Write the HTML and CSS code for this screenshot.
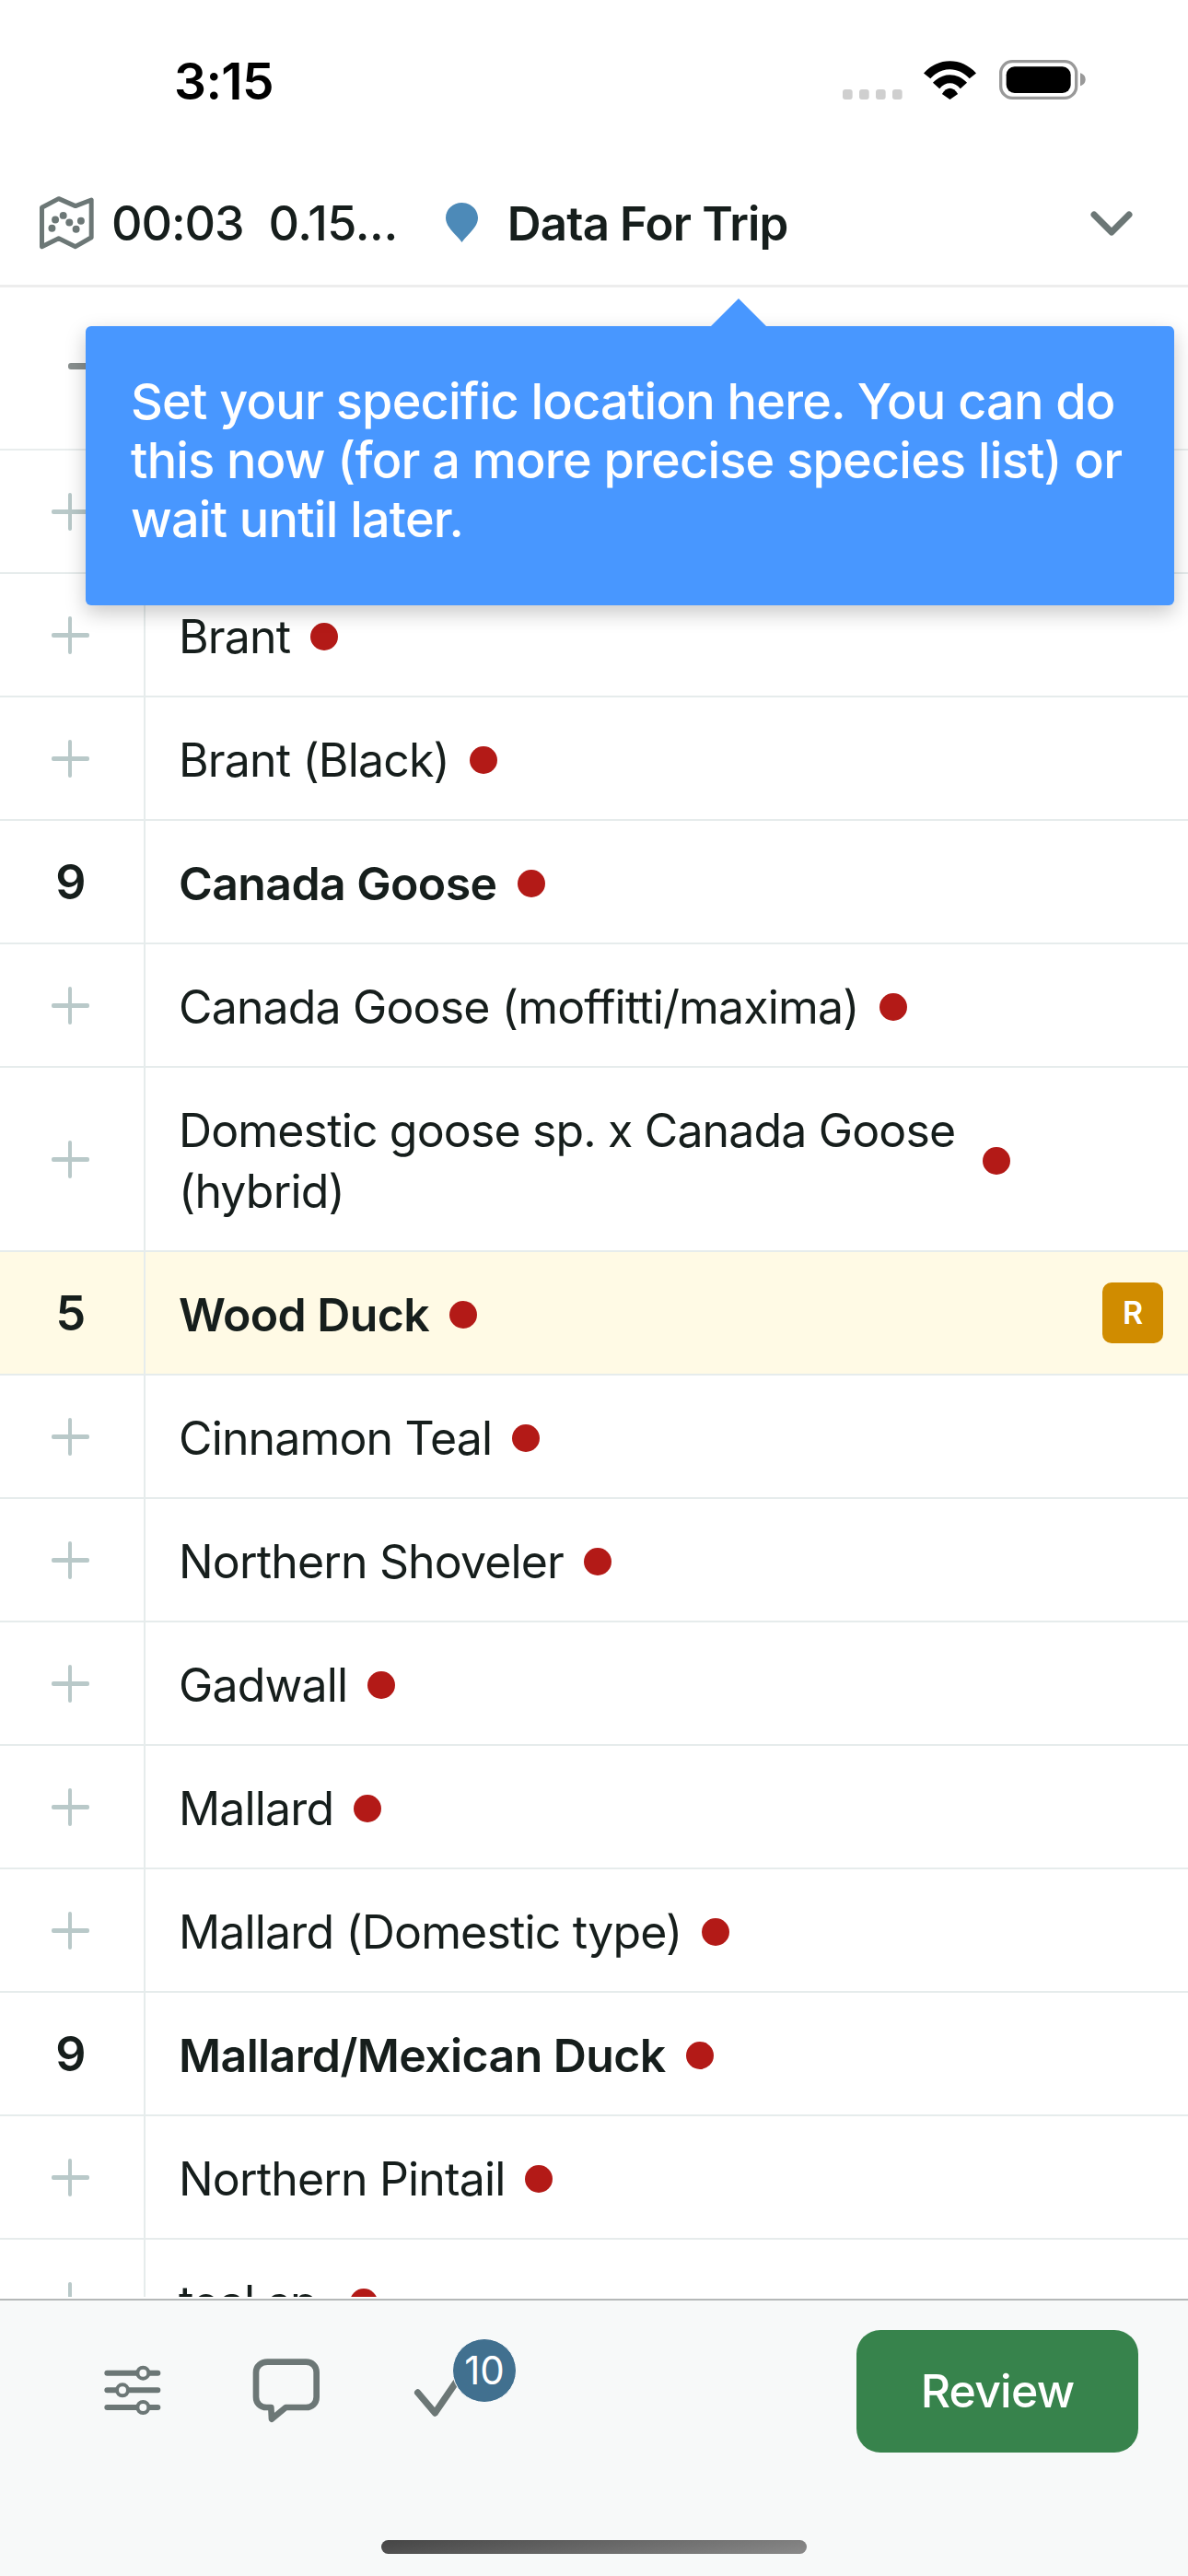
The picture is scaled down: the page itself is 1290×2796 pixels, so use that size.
FILE: index.html
```html
<!DOCTYPE html>
<html lang="en">
<head>
<meta charset="utf-8">
<title>Data For Trip</title>
<link rel="stylesheet" href="styles.css">
</head>
<body>
<div class="screen">
  <div class="status">
    <div class="clock">3:15</div>
    <div class="status-icons">
      <svg class="signal" viewBox="48 168 195 33" width="65" height="11"><rect x="48" y="168" width="32" height="33" rx="9"/><rect x="102" y="168" width="32" height="33" rx="9"/><rect x="156" y="168" width="32" height="33" rx="9"/><rect x="210" y="168" width="32" height="33" rx="9"/></svg>
      <svg class="wifi" viewBox="312 75 172 126" width="57" height="42"><path d="M312 115C360 62 436 62 484 115L462 133C426 92 370 92 334 133Z"/><path d="M342 146C375 112 421 112 454 146L432 166C412 142 384 142 364 166Z"/><path d="M372 183C388 158 408 158 424 183L398 201Z"/></svg>
      <svg class="battery" viewBox="552 75 282 129" width="94" height="43"><rect x="557" y="80" width="246" height="119" rx="38" fill="none" stroke="#999" stroke-width="10"/><rect x="575" y="97" width="210" height="86" rx="27"/><path d="M816 118C828 122 833 130 833 139C833 148 828 156 816 160Z" fill="#999"/></svg>
    </div>
  </div>

  <header class="topbar">
    <svg class="map-icon" viewBox="125 100 180 175" width="60" height="58"><path d="M135 137L190 108L245 132L297 112V235L245 265L190 238L135 265Z" fill="none" stroke="#6c7776" stroke-width="15" stroke-linejoin="round"/><g fill="#6c7776"><circle cx="168" cy="205" r="12"/><circle cx="179" cy="177" r="12"/><circle cx="205" cy="163" r="12"/><circle cx="225" cy="186" r="12"/><circle cx="263" cy="181" r="12"/><circle cx="247" cy="208" r="12"/></g></svg>
    <span class="stat time">00:03</span>
    <span class="stat dist">0.15...</span>
    <svg class="pin" viewBox="0 0 35 43" width="35" height="43"><path d="M17.5 43C12 35 0 27 0 16.5C0 7 8 0 17.5 0C27 0 35 7 35 16.5C35 27 23 35 17.5 43Z" fill="#4d8ab8"/></svg>
    <span class="stat place">Data For Trip</span>
    <svg class="chevron" viewBox="0 0 46 28" width="46" height="28"><path d="M4 4L23 23L42 4" fill="none" stroke="#6c7776" stroke-width="7" stroke-linecap="round" stroke-linejoin="round"/></svg>
  </header>

  <div class="list-head"><span class="minus"></span></div>

  <main class="list">
    <div class="row"><div class="count"><span class="plus"></span></div><div class="name-cell"></div></div>
    <div class="row"><div class="count"><span class="plus"></span></div><div class="name-cell"><span class="name">Brant</span><span class="dot"></span></div></div>
    <div class="row"><div class="count"><span class="plus"></span></div><div class="name-cell"><span class="name">Brant (Black)</span><span class="dot"></span></div></div>
    <div class="row seen"><div class="count">9</div><div class="name-cell"><span class="name">Canada Goose</span><span class="dot"></span></div></div>
    <div class="row"><div class="count"><span class="plus"></span></div><div class="name-cell"><span class="name">Canada Goose (moffitti/maxima)</span><span class="dot"></span></div></div>
    <div class="row"><div class="count"><span class="plus"></span></div><div class="name-cell"><span class="name">Domestic goose sp. x Canada Goose (hybrid)</span><span class="dot"></span></div></div>
    <div class="row seen rare"><div class="count">5</div><div class="name-cell"><span class="name">Wood Duck</span><span class="dot"></span><span class="tag">R</span></div></div>
    <div class="row"><div class="count"><span class="plus"></span></div><div class="name-cell"><span class="name">Cinnamon Teal</span><span class="dot"></span></div></div>
    <div class="row"><div class="count"><span class="plus"></span></div><div class="name-cell"><span class="name">Northern Shoveler</span><span class="dot"></span></div></div>
    <div class="row"><div class="count"><span class="plus"></span></div><div class="name-cell"><span class="name">Gadwall</span><span class="dot"></span></div></div>
    <div class="row"><div class="count"><span class="plus"></span></div><div class="name-cell"><span class="name">Mallard</span><span class="dot"></span></div></div>
    <div class="row"><div class="count"><span class="plus"></span></div><div class="name-cell"><span class="name">Mallard (Domestic type)</span><span class="dot"></span></div></div>
    <div class="row seen"><div class="count">9</div><div class="name-cell"><span class="name">Mallard/Mexican Duck</span><span class="dot"></span></div></div>
    <div class="row"><div class="count"><span class="plus"></span></div><div class="name-cell"><span class="name">Northern Pintail</span><span class="dot"></span></div></div>
    <div class="row"><div class="count"><span class="plus"></span></div><div class="name-cell"><span class="name">teal sp.</span><span class="dot"></span></div></div>
  </main>

  <footer class="footer">
    <div class="tools">
      <svg class="tool-sliders" viewBox="155 80 192 165" width="64" height="55"><g stroke="#6c7776" stroke-width="18" stroke-linecap="round"><path d="M168 106H333M168 162H333M168 218H333"/></g><g fill="#f7f9f9" stroke="#6c7776" stroke-width="12"><circle cx="285" cy="106" r="18"/><circle cx="218" cy="162" r="18"/><circle cx="285" cy="218" r="18"/></g></svg>
      <svg class="tool-chat" viewBox="640 58 228 213" width="76" height="71"><path d="M692 72H818C838 72 852 86 852 106V186C852 206 838 220 818 220H752L706 258L704 220H689C669 220 655 206 655 186V106C655 86 672 72 692 72Z" fill="none" stroke="#6c7776" stroke-width="20" stroke-linejoin="round"/></svg>
      <div class="tool-check">
        <svg viewBox="1165 130 150 120" width="50" height="40"><path d="M1182 172L1238 238L1305 140" fill="none" stroke="#6c7776" stroke-width="22" stroke-linecap="round" stroke-linejoin="round"/></svg>
        <span class="badge">10</span>
      </div>
    </div>
    <button class="review">Review</button>
    <div class="home"></div>
  </footer>

  <div class="tip">
    <span class="tip-arrow"></span>
    Set your specific location here. You can do this now (for a more precise species list) or wait until later.
  </div>
</div>
</body>
</html>
```
FILE: styles.css
```css
* { box-sizing: border-box; }
html, body { margin: 0; padding: 0; background: #fff; }
body { font-family: Inter, "Noto Sans", "Liberation Sans", sans-serif; color: #161e1c; }

.screen { position: relative; width: 1290px; height: 2796px; display: flex; flex-direction: column; overflow: hidden; }

.status { height: 174px; flex: none; display: flex; justify-content: space-between; align-items: flex-start; padding: 58px 111px 0 189px; }
.clock { font-size: 55px; line-height: 60px; font-weight: 600; color: #000; letter-spacing: -.6px; }
.status-icons { display: flex; align-items: flex-end; margin-top: 7px; }
.status-icons svg { display: block; }
.signal { fill: #cfcfcf; margin-right: 23px; }
.wifi { margin-right: 25px; }

.topbar { height: 138px; flex: none; display: flex; align-items: center; padding: 0 60px 0 42px; border-bottom: 3px solid #ededed; }
.map-icon { flex: none; }
.stat { font-size: 52px; line-height: 60px; font-weight: 500; margin-top: 3px; }
.time { margin-left: 19px; letter-spacing: -1.1px; }
.dist { margin-left: 27px; letter-spacing: -.4px; }
.pin { margin-left: 52px; flex: none; }
.place { margin-left: 32px; font-size: 51px; font-weight: 600; letter-spacing: -.85px; }
.chevron { margin-left: auto; flex: none; margin-top: 2px; }

.list-head { height: 177px; flex: none; border-bottom: 2px solid #e9eded; display: flex; align-items: center; padding: 0 0 0 74px; }
.minus { width: 30px; height: 7px; background: #888f8e; border-radius: 3px; margin-top: -4px; }

.list { flex: 1; min-height: 0; overflow: hidden; margin-bottom: 2px; }
.row { display: flex; border-bottom: 2px solid #e6ecec; font-size: 50px; line-height: 66px; letter-spacing: -.85px; }
.count { width: 158px; flex: none; border-right: 2px solid #e6ecec; padding: 2px 3px 0 0; display: flex; align-items: center; justify-content: center; font-size: 52px; font-weight: 600; }
.name-cell { flex: 1; min-width: 0; display: flex; align-items: center; min-height: 132px; padding: 35px 27px 31px 36px; }
.name { max-width: 851px; }
.seen .name { font-weight: 600; letter-spacing: -.6px; }
.rare { background: #fffae5; }
.dot { flex: none; width: 30px; height: 30px; border-radius: 50%; background: #b31a17; margin-left: 22px; }
.tag { margin-left: auto; width: 66px; height: 66px; margin-top: -2px; margin-bottom: 2px; border-radius: 10px; background: #d08c00; color: #fff; font-size: 34px; font-weight: 600; line-height: 66px; text-align: center; letter-spacing: 0; }

.plus { position: relative; display: block; width: 41px; height: 41px; margin-top: -2px; }
.plus::before, .plus::after { content: ""; position: absolute; background: #b9c9c9; border-radius: 2px; }
.plus::before { left: 18px; top: 0; width: 4px; height: 41px; }
.plus::after { left: 0; top: 18px; width: 41px; height: 5px; }

.footer { position: relative; height: 301px; flex: none; background: #f7f9f9; border-top: 2px solid #b5b8b8; padding: 32px 54px 0 112px; display: flex; justify-content: space-between; align-items: flex-start; }
.tools { display: flex; align-items: flex-start; }
.tools svg { display: block; }
.tool-sliders { margin-top: 38px; }
.tool-chat { margin: 30px 0 0 97px; }
.tool-check { position: relative; margin: 54px 0 0 99px; width: 50px; height: 40px; }
.badge { position: absolute; left: 43px; top: -45px; width: 70px; height: 70px; border-radius: 50%; background: #41708f; border: 1px solid #fff; color: #fff; font-size: 42px; line-height: 68px; text-align: center; }
.review { width: 306px; height: 133px; border: 0; border-radius: 26px; background: #37834c; color: #fff; font: 500 50px/133px Inter, "Noto Sans", sans-serif; letter-spacing: -.8px; padding: 0; }
.home { position: absolute; left: 414px; top: 260px; width: 462px; height: 15px; border-radius: 8px; background: linear-gradient(170deg, #454545, #8a8a8a); }

.tip { position: absolute; left: 93px; top: 354px; width: 1182px; height: 303px; padding: 50px 49px 0; background: #4897ff; border-radius: 6px; color: #fff; font-size: 54px; line-height: 64px; font-weight: 500; letter-spacing: -.78px; box-shadow: 0 8px 22px rgba(0,0,0,.22); }
.tip-arrow { position: absolute; left: 679px; top: -30px; width: 0; height: 0; border-left: 30px solid transparent; border-right: 30px solid transparent; border-bottom: 30px solid #4897ff; }
```
